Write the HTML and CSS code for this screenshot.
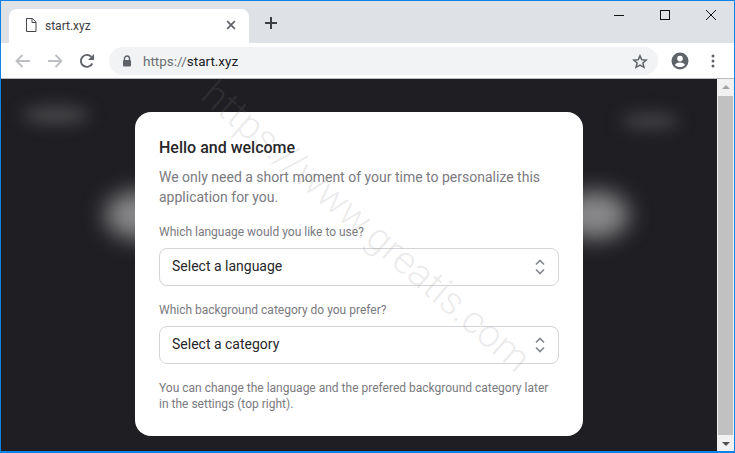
FILE: index.html
```html
<!DOCTYPE html>
<html lang="en">
<head>
<meta charset="utf-8">
<title>start.xyz</title>
<link rel="stylesheet" href="styles.css">
</head>
<body>
<div class="window">
  <header class="tabstrip">
    <div class="tab">
      <svg class="tab-file" width="12" height="14" viewBox="0 0 12 14"><path d="M1.5.5h6l3.500 3.500v9.500h-9.500zM7 .5v4h4" fill="none" stroke="#45484c" stroke-width="1"/></svg>
      <span class="tab-title">start.xyz</span>
      <svg class="tab-close" width="10" height="10" viewBox="0 0 10 10"><path d="M1.200 1.200l7.600 7.600M8.800 1.200l-7.600 7.600" stroke="#5f6368" stroke-width="1.700"/></svg>
    </div>
    <svg class="new-tab" width="14" height="14" viewBox="0 0 14 14"><path d="M7 1v12M1 7h12" stroke="#3c4043" stroke-width="2"/></svg>
    <div class="win-controls">
      <svg width="12" height="12" viewBox="0 0 12 12"><path d="M1 6.500h10" stroke="#111" stroke-width="1"/></svg>
      <svg width="12" height="12" viewBox="0 0 12 12"><rect x="1.500" y="1.500" width="9" height="9" fill="none" stroke="#111" stroke-width="1"/></svg>
      <svg width="12" height="12" viewBox="0 0 12 12"><path d="M1 1l10 10M11 1L1 11" stroke="#111" stroke-width="1"/></svg>
    </div>
  </header>
  <nav class="toolbar">
    <svg class="nav-icon" width="16" height="14" viewBox="0 0 16 14"><path d="M15 7H2M7.500 1L1.500 7l6 6" fill="none" stroke="#bcbfc3" stroke-width="1.800"/></svg>
    <svg class="nav-icon" width="16" height="14" viewBox="0 0 16 14"><path d="M1 7h13M8.500 1l6 6-6 6" fill="none" stroke="#bcbfc3" stroke-width="1.800"/></svg>
    <svg class="nav-icon" width="16" height="16" viewBox="0 0 16 16"><path d="M13.300 10.500A6 6 0 1 1 12.300 3.800" fill="none" stroke="#5f6368" stroke-width="1.900"/><path d="M15 1v6H9z" fill="#5f6368"/></svg>
    <div class="omnibox">
      <svg class="lock" width="10" height="12" viewBox="0 0 10 12"><path d="M2.500 5V3.500a2.500 2.500 0 0 1 5 0V5" fill="none" stroke="#5f6368" stroke-width="1.400"/><rect x="1" y="5" width="8" height="6.500" rx="1" fill="#5f6368"/></svg>
      <span class="url"><span class="scheme">https://</span>start.xyz</span>
      <svg class="star" width="16" height="15" viewBox="0 0 16 15"><path d="M8 1.700l1.800 4 4.400.4-3.300 2.900 1 4.300L8 11l-3.900 2.300 1-4.300-3.300-2.900 4.400-.4z" fill="none" stroke="#5f6368" stroke-width="1.500"/></svg>
    </div>
    <svg class="avatar" width="18" height="18" viewBox="0 0 18 18"><circle cx="9" cy="9" r="8.500" fill="#5f6368"/><circle cx="9" cy="6.600" r="2.800" fill="#fff"/><path d="M3.800 13c1-1.900 3-2.600 5.200-2.600s4.200.7 5.200 2.600c-1.200 1.300-3.100 2.100-5.200 2.100s-4-.8-5.200-2.100z" fill="#fff"/></svg>
    <svg class="menu" width="4" height="14" viewBox="0 0 4 14"><circle cx="2" cy="2" r="1.500" fill="#5f6368"/><circle cx="2" cy="7" r="1.500" fill="#5f6368"/><circle cx="2" cy="12" r="1.500" fill="#5f6368"/></svg>
  </nav>
  <div class="viewport">
    <main class="page">
      <div class="blob blob-tl"></div>
      <div class="blob blob-tr"></div>
      <div class="blob blob-ml"></div>
      <div class="blob blob-mr"></div>
      <section class="card">
        <h1 class="title">Hello and welcome</h1>
        <p class="lead">We only need a short moment of your time to personalize this application for you.</p>
        <label class="field-label">Which language would you like to use?</label>
        <div class="select">
          <span class="select-text">Select a language</span>
          <svg width="10" height="16" viewBox="0 0 10 16"><path d="M1 5.500l4-4 4 4M1 10.500l4 4 4-4" fill="none" stroke="#85888d" stroke-width="1.700"/></svg>
        </div>
        <label class="field-label second">Which background category do you prefer?</label>
        <div class="select">
          <span class="select-text">Select a category</span>
          <svg width="10" height="16" viewBox="0 0 10 16"><path d="M1 5.500l4-4 4 4M1 10.500l4 4 4-4" fill="none" stroke="#85888d" stroke-width="1.700"/></svg>
        </div>
        <p class="note">You can change the language and the prefered background category later in the settings (top right).</p>
      </section>
      <div class="watermark">https://www.greatis.com</div>
    </main>
    <aside class="scrollbar">
      <div class="arrow arrow-up"></div>
      <div class="thumb"></div>
      <div class="arrow arrow-down"></div>
    </aside>
  </div>
</div>
</body>
</html>
```
FILE: styles.css
```css
* { box-sizing: border-box; }
html, body { margin: 0; height: 100%; overflow: hidden; }
body { font-family: Roboto, "Liberation Sans", sans-serif; }

.window {
  width: 735px;
  height: 453px;
  border: 1px solid #0f82e6;
  border-bottom-width: 2px;
  display: flex;
  flex-direction: column;
  background: #fff;
}

.tabstrip {
  height: 42px;
  flex: none;
  background: #dee1e6;
  display: flex;
  align-items: flex-end;
  padding-left: 8px;
  position: relative;
}
.tab {
  width: 240px;
  height: 34px;
  background: #fff;
  border-radius: 8px 8px 0 0;
  display: flex;
  align-items: center;
  padding: 0 13px 2px 16px;
}
.tab-title {
  font-size: 12px;
  line-height: 16px;
  color: #3c4043;
  margin: 2px 0 0 8px;
  flex: 1;
}
.new-tab { margin: 0 0 13px 15px; }
.win-controls {
  margin-left: auto;
  display: flex;
  gap: 34px;
  padding-right: 17px;
  align-self: flex-start;
  padding-top: 8px;
}
.toolbar {
  height: 36px;
  flex: none;
  display: flex;
  align-items: center;
  padding: 1px 0 0 14px;
  border-bottom: 1px solid #b9bbbe;
}
.nav-icon { margin-right: 16px; }
.nav-icon:nth-child(3) { margin-right: 14px; }
.omnibox {
  width: 549px;
  height: 28px;
  background: #f1f3f4;
  border-radius: 14px;
  display: flex;
  align-items: center;
  padding: 0 10px 0 13px;
}
.url {
  font-size: 13.500px;
  color: #202124;
  margin-left: 11px;
  flex: 1;
}
.scheme { color: #6b6e72; }
.avatar { margin-left: 13px; }
.menu { margin-left: 22px; }

.viewport { flex: 1; display: flex; min-height: 0; }
.page {
  flex: 1;
  background: #1f1f23;
  position: relative;
  padding-top: 33px;
  display: flex;
  justify-content: center;
  align-items: flex-start;
}
.blob { position: absolute; border-radius: 50%; }
.blob-tl { left: 22px; top: 27px; width: 66px; height: 18px; background: #48484b; filter: blur(8px); }
.blob-tr { left: 620px; top: 34px; width: 58px; height: 16px; background: #434346; filter: blur(8px); }
.blob-ml { left: 104px; top: 112px; width: 70px; height: 48px; background: #89898b; filter: blur(11px); }
.blob-mr { left: 560px; top: 112px; width: 68px; height: 48px; background: #89898b; filter: blur(11px); }

.card {
  width: 448px;
  height: 324px;
  background: #fff;
  border-radius: 16px;
  padding: 25px 24px 24px;
  position: relative;
}
.title {
  margin: 0;
  font-size: 16px;
  line-height: 22px;
  font-weight: 500;
  color: #27272a;
}
.lead {
  margin: 8px 0 0;
  font-size: 14px;
  line-height: 20px;
  color: #7a7a80;
}
.field-label {
  display: block;
  margin-top: 17px;
  font-size: 12px;
  line-height: 16px;
  color: #7a7a80;
}
.field-label.second { margin-top: 16px; }
.select {
  margin-top: 8px;
  height: 38px;
  border: 1px solid #d4d4d8;
  border-radius: 8px;
  padding: 0 13px 0 12px;
  display: flex;
  align-items: center;
  justify-content: space-between;
  font-size: 14px;
  color: #27272a;
}
.select-text { margin-bottom: 2px; line-height: 18px; }
.note {
  margin: 16px 0 0;
  font-size: 12px;
  line-height: 16px;
  color: #7a7a80;
}

.watermark {
  position: absolute;
  left: 155px;
  top: 127px;
  width: 420px;
  text-align: center;
  font-size: 39px;
  font-weight: 300;
  line-height: 40px;
  white-space: nowrap;
  color: rgba(130, 130, 130, 0.16);
  transform: rotate(41deg);
  pointer-events: none;
}

.scrollbar {
  width: 17px;
  flex: none;
  background: #f1f1f1;
  display: flex;
  flex-direction: column;
  align-items: center;
  padding: 0 1px;
}
.arrow { flex: none; width: 0; height: 0; border-left: 4px solid transparent; border-right: 4px solid transparent; }
.arrow-up { border-bottom: 4px solid #a3a3a3; margin: 6px 0 7px; }
.arrow-down { border-top: 4px solid #505050; margin: 7px 0 5px; }
.thumb { flex: 1; width: 15px; background: #c1c1c1; }
```
